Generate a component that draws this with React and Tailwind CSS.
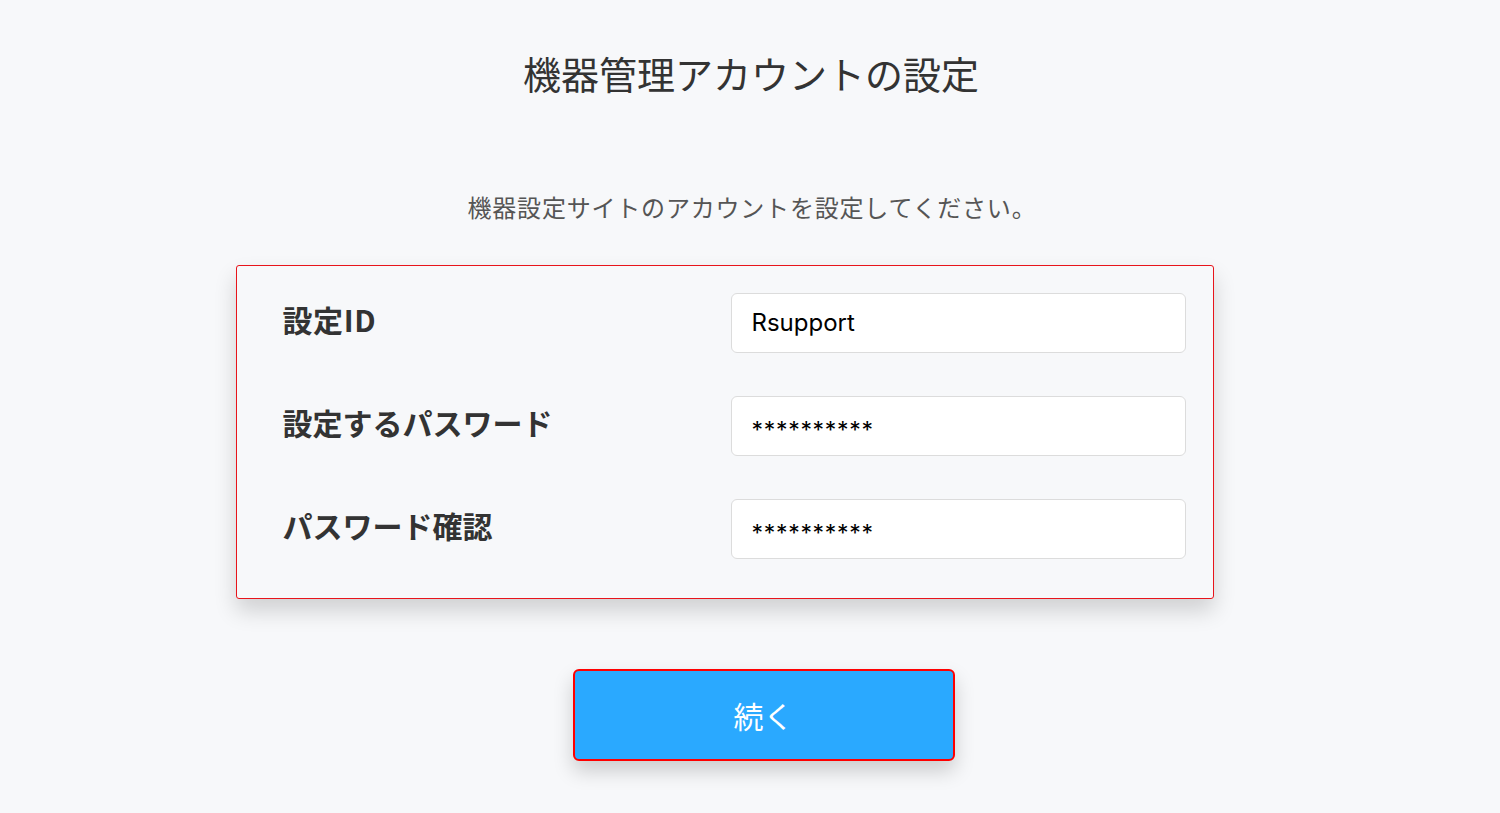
import React, { useState } from 'react';

const JP = { fontFamily: '"Noto Sans CJK JP", "Noto Sans", sans-serif' };

const FIELDS = [
  { label: '設定ID', value: 'Rsupport', type: 'text' },
  { label: '設定するパスワード', value: '**********', type: 'mask' },
  { label: 'パスワード確認', value: '**********', type: 'mask' },
];

const App = () => {
  const [values, setValues] = useState(FIELDS.map((f) => f.value));

  return (
    <div className="min-h-[813px] w-full bg-[#f7f8fa] flex flex-col items-center" style={JP}>
      <h1 className="mt-[47px] text-[38px] leading-[52px] text-[#333] ml-[2px]">
        機器管理アカウントの設定
      </h1>
      <p className="mt-[91px] text-[24px] tracking-[0.8px] leading-[34px] text-[#555] ml-[4px]">
        機器設定サイトのアカウントを設定してください。
      </p>

      <div className="mt-[41px] mr-[51px] w-[978px] rounded-[3px] border border-[#e8141b] bg-[#f7f8fa] shadow-[0_12px_22px_rgba(0,0,0,0.16)] pl-[46px] pr-[27px] pt-[27px] pb-[39px] flex flex-col gap-[43px]">
        {FIELDS.map((field, i) => (
          <div key={i} className="flex items-center justify-between h-[60px]">
            <span className={`text-[30px] font-bold text-[#333] ${i === 0 ? 'mb-[7px] tracking-[0.6px]' : 'mb-[7px]'}`}>
              {field.label}
            </span>
            <input
              value={values[i]}
              onChange={(e) => {
                const next = [...values];
                next[i] = e.target.value;
                setValues(next);
              }}
              className={`w-[455px] h-[60px] rounded-[6px] border border-[#dcdcdc] bg-white pl-[20px] text-black outline-none ${
                field.type === 'text' ? 'text-[24px] pb-[2px]' : 'text-[23px] tracking-[0.7px] pt-[8px]'
              }`}
              style={{ fontFamily: 'Inter, "Noto Sans", sans-serif' }}
            />
          </div>
        ))}
      </div>

      <button className="mt-[70px] ml-[27px] w-[382px] h-[92px] rounded-[6px] border-2 border-[#ff0000] bg-[#2aa9ff] text-white text-[30px] shadow-[0_10px_20px_rgba(0,0,0,0.18)]">
        続く
      </button>
    </div>
  );
};

export default App;
